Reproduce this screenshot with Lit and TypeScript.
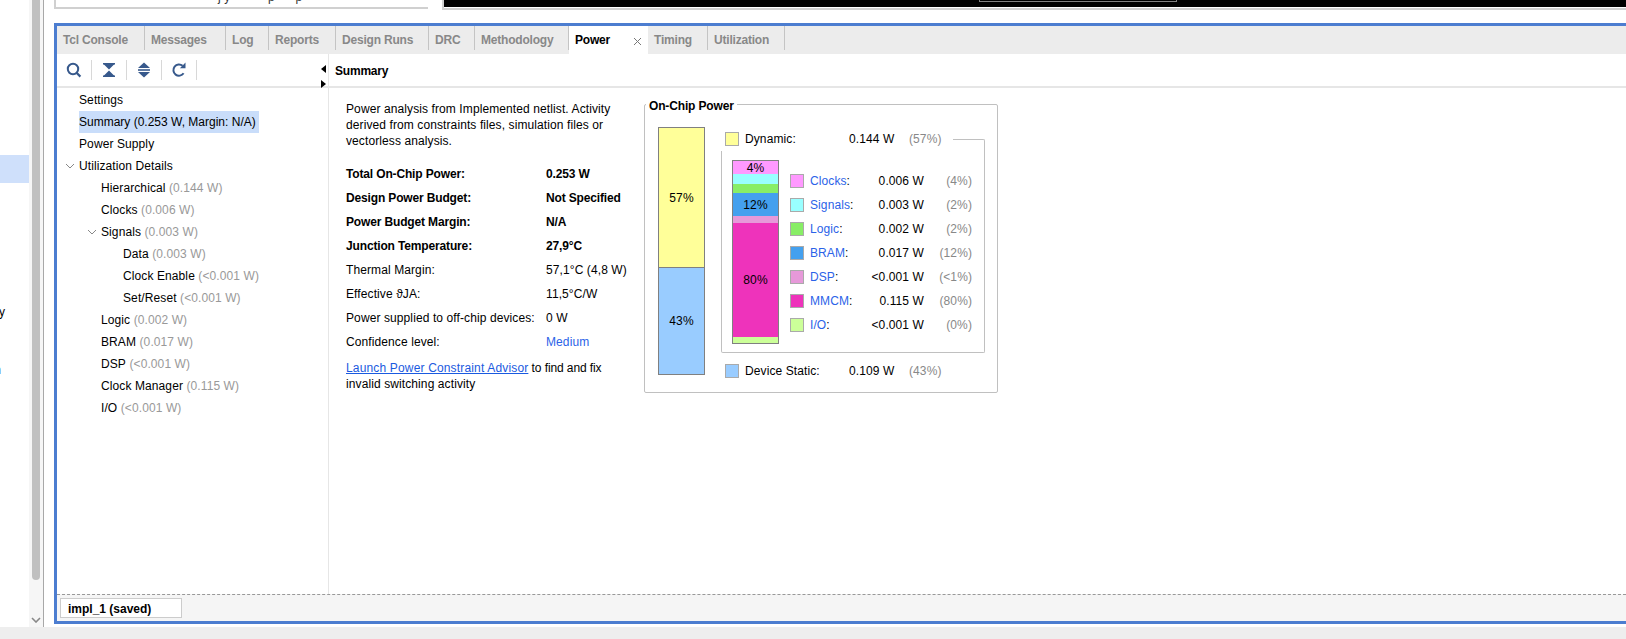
import { LitElement, html, css, svg } from "lit";
import { customElement } from "lit/decorators.js";

const TABS: [string, number][] = [["Tcl Console", 88], ["Messages", 81], ["Log", 43], ["Reports", 67], ["Design Runs", 93], ["DRC", 46], ["Methodology", 94], ["Power", 79], ["Timing", 60], ["Utilization", 77]];

const TREE: [number, string, string, boolean?][] = [
  [0, "Settings", ""],
  [0, "Summary (0.253 W, Margin: N/A)", ""],
  [0, "Power Supply", ""],
  [0, "Utilization Details", "", true],
  [1, "Hierarchical", "(0.144 W)"],
  [1, "Clocks", "(0.006 W)"],
  [1, "Signals", "(0.003 W)", true],
  [2, "Data", "(0.003 W)"],
  [2, "Clock Enable", "(<0.001 W)"],
  [2, "Set/Reset", "(<0.001 W)"],
  [1, "Logic", "(0.002 W)"],
  [1, "BRAM", "(0.017 W)"],
  [1, "DSP", "(<0.001 W)"],
  [1, "Clock Manager", "(0.115 W)"],
  [1, "I/O", "(<0.001 W)"],
];

const FACTS: [string, string, string][] = [
  ["Total On-Chip Power:", "0.253 W", "b"],
  ["Design Power Budget:", "Not Specified", "b"],
  ["Power Budget Margin:", "N/A", "b"],
  ["Junction Temperature:", "27,9°C", "b"],
  ["Thermal Margin:", "57,1°C (4,8 W)", ""],
  ["Effective ϑJA:", "11,5°C/W", ""],
  ["Power supplied to off-chip devices:", "0 W", ""],
  ["Confidence level:", "Medium", "m"],
];

const SEGMENTS: [string, number, string][] = [
  ["seg-clocks", 13, "4%"],
  ["seg-signals", 10, ""],
  ["seg-logic", 9, ""],
  ["seg-bram", 23, "12%"],
  ["seg-dsp", 7, ""],
  ["seg-mmcm", 114, "80%"],
  ["seg-io", 6, ""],
];

const ROWS: [string, string, string, string][] = [
  ["seg-clocks", "Clocks", "0.006 W", "(4%)"],
  ["seg-signals", "Signals", "0.003 W", "(2%)"],
  ["seg-logic", "Logic", "0.002 W", "(2%)"],
  ["seg-bram", "BRAM", "0.017 W", "(12%)"],
  ["seg-dsp", "DSP", "<0.001 W", "(<1%)"],
  ["seg-mmcm", "MMCM", "0.115 W", "(80%)"],
  ["seg-io", "I/O", "<0.001 W", "(0%)"],
];

const chevron = html`<svg class="chev" width="10" height="6" viewBox="0 0 10 6"><path d="M1 1l4 4 4-4" fill="none" stroke="#888" stroke-width="1"/></svg>`;

const ICONS = [
  svg`<circle cx="8" cy="8" r="5.2" fill="none" stroke="#37598c" stroke-width="2"/><path d="M11.8 12l3.6 3.6" stroke="#37598c" stroke-width="2.2"/>`,
  svg`<path d="M3 2.8h12M3 15.2h12" stroke="#37598c" stroke-width="1.6"/><path d="M3.5 3h11L9 8.4zM3.5 15h11L9 9.6z" fill="#37598c"/>`,
  svg`<path d="M9 1.5l6 5.5H3zM9 16.5l6-5.5H3z" fill="#37598c"/><path d="M3 9h12" stroke="#37598c" stroke-width="1.6"/>`,
  svg`<path d="M13.6 12.3A5.6 5.6 0 1 1 12.6 4.8" fill="none" stroke="#37598c" stroke-width="2"/><path d="M9.9 7.2h5.6V1.6z" fill="#37598c"/>`,
];

@customElement("app-root")
export class AppRoot extends LitElement {
  static styles = css`
    :host { display: block; width: 1626px; height: 639px; overflow: hidden; background: #fff;
      font: 12px/16px "Liberation Sans", Arial, sans-serif; color: #000; letter-spacing: 0.1px; }
    .page { display: flex; height: 627px; }
    .bottom-strip { height: 12px; background: #eeeeee; }

    .side { width: 54px; flex: none; display: flex; }
    .side-view { width: 29px; flex: none; position: relative; overflow: hidden; padding-top: 155px; box-sizing: border-box; }
    .side-sel { height: 28px; background: #cfe0fb; }
    .frag { height: 16px; display: flex; justify-content: flex-end; line-height: 16px; }
    .frag-y { margin-top: 121px; color: #000; margin-right: 24px; }
    .frag-n { margin-top: 42px; color: #00207a; margin-right: 28px; }
    .track { width: 15px; flex: none; box-sizing: border-box; background: #f6f6f6; border-right: 1px solid #a8a8a8;
      padding-left: 3px; display: flex; flex-direction: column; }
    .thumb { width: 8px; height: 580px; background: #c0c0c0; border-radius: 0 0 4px 4px; }
    .track svg { margin: 37px 0 0 -1px; }

    .main { flex: 1; min-width: 0; display: flex; flex-direction: column; }
    .top { height: 23px; flex: none; display: flex; gap: 14px; align-items: flex-start; }
    .top-a { width: 374px; height: 9px; box-sizing: border-box; border-left: 2px solid #d0d0d0; border-bottom: 2px solid #d0d0d0;
      overflow: hidden; position: relative; padding-left: 162px; }
    .top-a span { display: block; white-space: pre; line-height: 16px; margin-top: -11px; color: #333; }
    .top-b { flex: 1; height: 10px; box-sizing: border-box; border-left: 2px solid #d0d0d0; border-bottom: 2px solid #d0d0d0; }
    .black { height: 7px; background: #000; padding-left: 535px; box-sizing: border-box; }
    .black div { width: 198px; height: 2px; box-sizing: border-box; border: 1px solid #808080; border-top: 0; }

    .frame { flex: none; display: flex; flex-direction: column; border: 3px solid #4c7dd0; border-right: 0; height: 601px; box-sizing: border-box; }
    .tabs { height: 28px; flex: none; background: #ececec; display: flex; align-items: flex-start; }
    .tab { height: 24px; flex: none; box-sizing: border-box; padding: 6px 0 0 6px; border-right: 1px solid #c4c4c4; font-weight: bold; color: #888; white-space: nowrap; letter-spacing: -0.2px; }
    .tab.active { height: 28px; background: #fff; color: #000; border-right: 0; position: relative; }
    .close { position: absolute; left: 64px; top: 11px; }

    .body { flex: 1; min-height: 0; display: flex; }
    .left { width: 272px; flex: none; box-sizing: border-box; border-right: 1px solid #e6e6e6; position: relative; }
    .bar { height: 34px; box-sizing: border-box; border-bottom: 2px solid #e6e6e6; display: flex; padding-top: 6px; }
    .tool { width: 35px; height: 20px; box-sizing: border-box; border-right: 1px solid #d8d8d8; display: flex; align-items: center; justify-content: center; }
    .arrow { position: absolute; width: 0; height: 0; left: 264px; border-top: 4.5px solid transparent; border-bottom: 4.5px solid transparent; }
    .arrow.l { top: 11px; border-right: 5px solid #000; }
    .arrow.r { top: 26px; border-left: 5px solid #000; }
    .tree { padding: 1px 0 0 22px; }
    .node { height: 22px; display: flex; align-items: center; position: relative; white-space: pre; }
    .node.l1 { padding-left: 22px; }
    .node.l2 { padding-left: 44px; }
    .node span.sel { background: #c9ddfa; height: 22px; line-height: 22px; padding-right: 3px; letter-spacing: 0; }
    .dim { color: #999; }
    .chev { margin-left: -14px; margin-right: 4px; flex: none; }

    .right { flex: 1; min-width: 0; display: flex; flex-direction: column; }
    .head { height: 34px; flex: none; box-sizing: border-box; border-bottom: 2px solid #e6e6e6; font-weight: bold; padding: 9px 0 0 6px; letter-spacing: -0.2px; }
    .content { display: flex; padding-left: 17px; }
    .info { width: 298px; flex: none; padding-top: 13px; box-sizing: border-box; }
    .desc { width: 272px; }
    .facts { margin-top: 13px; display: grid; grid-template-columns: 200px 1fr; grid-auto-rows: 24px; align-items: center; }
    .b { font-weight: bold; letter-spacing: -0.15px; }
    .m { color: #2b63e8; }
    .advice { margin-top: 6px; width: 275px; }
    .advice a { color: #1a5ae0; text-decoration: underline; letter-spacing: 0.16px; }
    .advice .tight { letter-spacing: -0.1px; }

    .box { position: relative; width: 354px; height: 289px; margin-top: 16px; box-sizing: border-box; border: 1px solid #c0c0c0; border-radius: 2px;
      padding: 22px 0 0 13px; display: flex; gap: 16px; }
    .legend { position: absolute; left: 1px; top: -6px; background: #fff; padding: 0 3px; font-weight: bold; line-height: 14px; letter-spacing: -0.15px; }
    .stack { width: 47px; box-sizing: border-box; border: 1px solid #808080; display: flex; flex-direction: column; }
    .stack.big { height: 248px; }
    .seg { display: flex; align-items: center; justify-content: center; flex: none; line-height: 12px; overflow: hidden; }
    .dyn { background: #ffff99; height: 139px; border-bottom: 1px solid #808080; }
    .sta { background: #99ccff; flex: 1; }
    .col { width: 264px; flex: none; display: flex; flex-direction: column; }
    .lrow { display: flex; align-items: center; padding-left: 4px; }
    .lrow.first { height: 19px; align-items: flex-start; margin-top: 5px; }
    .lrow.last { margin-top: 11px; height: 14px; }
    .sw { width: 14px; height: 14px; box-sizing: border-box; border: 1px solid #aaaaaa; flex: none; }
    .lname { width: 104px; margin-left: 6px; line-height: 15px; }
    .lval { width: 50px; line-height: 15px; }
    .lpct { width: 44px; margin-left: 10px; color: #888; line-height: 15px; }
    .conn { flex: 1; margin: 7px 0 0 0; height: 12px; border-top: 1px solid #c0c0c0; border-right: 1px solid #c0c0c0; box-sizing: border-box; border-top-right-radius: 2px; }
    .group { box-sizing: border-box; height: 202px; border: 1px solid #c0c0c0; border-top: 0; border-radius: 0 0 2px 2px; padding: 9px 0 0 10px; display: flex; gap: 11px; }
    .group .stack { height: 184px; }
    .rows { margin-top: 9px; }
    .row { height: 24px; display: flex; align-items: center; }
    .rname { width: 64px; margin-left: 6px; }
    .rname a { color: #2b63e8; }
    .rval { width: 50px; text-align: right; white-space: nowrap; display: flex; justify-content: flex-end; }
    .rpct { width: 48px; text-align: right; color: #888; }

    .seg-clocks { background: #ff99ff; }
    .seg-signals { background: #99ffff; }
    .seg-logic { background: #88ee66; }
    .seg-bram { background: #44a0ee; }
    .seg-dsp { background: #e699d9; }
    .seg-mmcm { background: #ee33bb; }
    .seg-io { background: #ccff99; }
    .sw-dyn { background: #ffff99; }
    .sw-sta { background: #99ccff; }

    .foot { height: 27px; flex: none; box-sizing: border-box; border-top: 1px dashed #999; background: #f5f5f5; padding: 3px 0 0 3px; }
    .run { width: 122px; height: 20px; box-sizing: border-box; border: 1px solid #cccccc; background: #fff; font-weight: bold; padding: 2px 0 0 7px; letter-spacing: 0; }
  `;

  render() {
    return html`
      <div class="page">
        <div class="side">
          <div class="side-view">
            <div class="side-sel"></div>
            <div class="frag frag-y">y</div>
            <div class="frag frag-n">n</div>
          </div>
          <div class="track">
            <div class="thumb"></div>
            <svg width="10" height="6" viewBox="0 0 10 6"><path d="M1 1l4 4 4-4" fill="none" stroke="#888" stroke-width="1.6"/></svg>
          </div>
        </div>
        <div class="main">
          <div class="top">
            <div class="top-a"><span>j y           p      p</span></div>
            <div class="top-b"><div class="black"><div></div></div></div>
          </div>
          <div class="frame">
            <div class="tabs">
              ${TABS.map(([t, w]) => t === "Power"
                ? html`<div class="tab active" style="width:${w}px">${t}<svg class="close" width="9" height="9" viewBox="0 0 9 9"><path d="M1 1l7 7M8 1l-7 7" stroke="#777" stroke-width="1"/></svg></div>`
                : html`<div class="tab" style="width:${w}px">${t}</div>`)}
            </div>
            <div class="body">
              <div class="left">
                <div class="bar">
                  ${ICONS.map((i) => html`<div class="tool"><svg width="18" height="18" viewBox="0 0 18 18">${i}</svg></div>`)}
                </div>
                <i class="arrow l"></i><i class="arrow r"></i>
                <div class="tree">
                  ${TREE.map(([lvl, name, val, open], i) => html`
                    <div class="node l${lvl}">${open ? chevron : ""}${i === 1
                      ? html`<span class="sel">${name}</span>`
                      : html`<span>${name}</span>${val ? html`<span class="dim"> ${val}</span>` : ""}`}</div>`)}
                </div>
              </div>
              <div class="right">
                <div class="head">Summary</div>
                <div class="content">
                  <div class="info">
                    <div class="desc">Power analysis from Implemented netlist. Activity derived from constraints files, simulation files or vectorless analysis.</div>
                    <div class="facts">
                      ${FACTS.map(([k, v, c]) => html`<div class=${c === "b" ? "b" : ""}>${k}</div><div class=${c}>${v}</div>`)}
                    </div>
                    <div class="advice"><a>Launch Power Constraint Advisor</a><span class="tight"> to find and fix</span> invalid switching activity</div>
                  </div>
                  <div class="box">
                    <div class="legend">On-Chip Power</div>
                    <div class="stack big">
                      <div class="seg dyn">57%</div>
                      <div class="seg sta">43%</div>
                    </div>
                    <div class="col">
                      <div class="lrow first">
                        <div class="sw sw-dyn"></div>
                        <div class="lname">Dynamic:</div>
                        <div class="lval">0.144 W</div>
                        <div class="lpct">(57%)</div>
                        <div class="conn"></div>
                      </div>
                      <div class="group">
                        <div class="stack">
                          ${SEGMENTS.map(([c, h, t]) => html`<div class="seg ${c}" style="height:${h}px">${t}</div>`)}
                        </div>
                        <div class="rows">
                          ${ROWS.map(([c, n, v, p]) => html`
                            <div class="row">
                              <div class="sw ${c}"></div>
                              <div class="rname"><a>${n}</a>:</div>
                              <div class="rval">${v}</div>
                              <div class="rpct">${p}</div>
                            </div>`)}
                        </div>
                      </div>
                      <div class="lrow last">
                        <div class="sw sw-sta"></div>
                        <div class="lname">Device Static:</div>
                        <div class="lval">0.109 W</div>
                        <div class="lpct">(43%)</div>
                      </div>
                    </div>
                  </div>
                </div>
              </div>
            </div>
            <div class="foot"><div class="run">impl_1 (saved)</div></div>
          </div>
        </div>
      </div>
      <div class="bottom-strip"></div>
    `;
  }
}
